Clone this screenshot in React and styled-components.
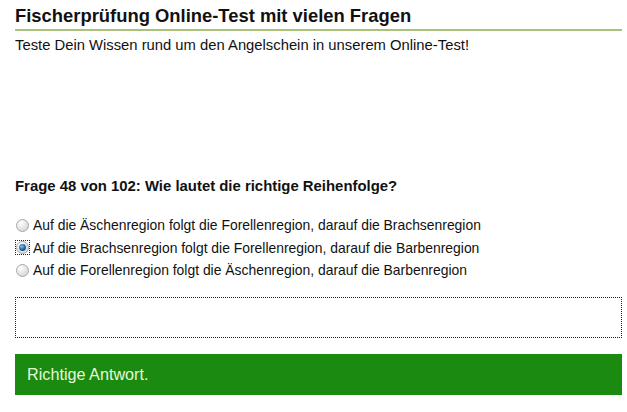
import React from "react";
import styled, { createGlobalStyle } from "styled-components";

const Global = createGlobalStyle`
  html, body { margin: 0; padding: 0; background: #fff; }
  body { font-family: "Liberation Sans", Arial, sans-serif; color: #111; }
`;

const Page = styled.div`
  width: 607px;
  padding: 5px 0 0 15px;
`;

const Title = styled.h1`
  margin: 0;
  font-size: 18.4px;
  line-height: 22px;
  font-weight: bold;
  color: #111;
  padding-bottom: 2px;
  border-bottom: 2px solid #a9c27c;
`;

const Intro = styled.p`
  margin: 5px 0 0;
  font-size: 14.8px;
  line-height: 18px;
`;

const Question = styled.h2`
  margin: 123px 0 0;
  font-size: 14.9px;
  line-height: 18px;
  font-weight: bold;
`;

const Options = styled.div`
  margin-top: 21px;
  display: flex;
  flex-direction: column;
  gap: 4.5px;
`;

const Option = styled.label`
  display: flex;
  align-items: center;
  gap: 3px;
  font-size: 13.9px;
  line-height: 18px;
`;

const RadioBox = styled.span`
  display: inline-flex;
  width: 15px;
  height: 15px;
  align-items: center;
  justify-content: center;
  box-sizing: border-box;
  outline: ${(p) => (p.$focus ? "1px dotted #222" : "none")};
  outline-offset: -1px;
`;

const Radio = ({ checked, focus }) => (
  <RadioBox $focus={focus}>
    <svg width="13" height="13" viewBox="0 0 13 13">
      <defs>
        <radialGradient id="rg" cx="0.35" cy="0.3" r="0.8">
          <stop offset="0" stopColor="#ffffff" />
          <stop offset="1" stopColor="#d2d2d2" />
        </radialGradient>
        <radialGradient id="rb" cx="0.4" cy="0.35" r="0.7">
          <stop offset="0" stopColor="#8fc2ea" />
          <stop offset="0.6" stopColor="#2a6ca8" />
          <stop offset="1" stopColor="#0f3c6a" />
        </radialGradient>
      </defs>
      <circle cx="6.5" cy="6.5" r="6" fill="url(#rg)" stroke="#a8a8a8" strokeWidth="1" />
      {checked && <circle cx="6.5" cy="6.5" r="3.4" fill="url(#rb)" />}
    </svg>
  </RadioBox>
);

const AnswerBox = styled.div`
  margin-top: 18px;
  height: 39px;
  border: 1px dotted #222;
`;

const Result = styled.div`
  margin-top: 16px;
  height: 41px;
  background: #1b8a10;
  color: #e6f7d8;
  font-size: 16.2px;
  display: flex;
  align-items: center;
  padding-left: 12px;
`;

const options = [
  "Auf die Äschenregion folgt die Forellenregion, darauf die Brachsenregion",
  "Auf die Brachsenregion folgt die Forellenregion, darauf die Barbenregion",
  "Auf die Forellenregion folgt die Äschenregion, darauf die Barbenregion",
];

export default function App() {
  return (
    <Page>
      <Global />
      <Title>Fischerprüfung Online-Test mit vielen Fragen</Title>
      <Intro>Teste Dein Wissen rund um den Angelschein in unserem Online-Test!</Intro>
      <Question>Frage 48 von 102: Wie lautet die richtige Reihenfolge?</Question>
      <Options>
        {options.map((o, i) => (
          <Option key={i}>
            <Radio checked={i === 1} focus={i === 1} />
            {o}
          </Option>
        ))}
      </Options>
      <AnswerBox />
      <Result>Richtige Antwort.</Result>
    </Page>
  );
}
